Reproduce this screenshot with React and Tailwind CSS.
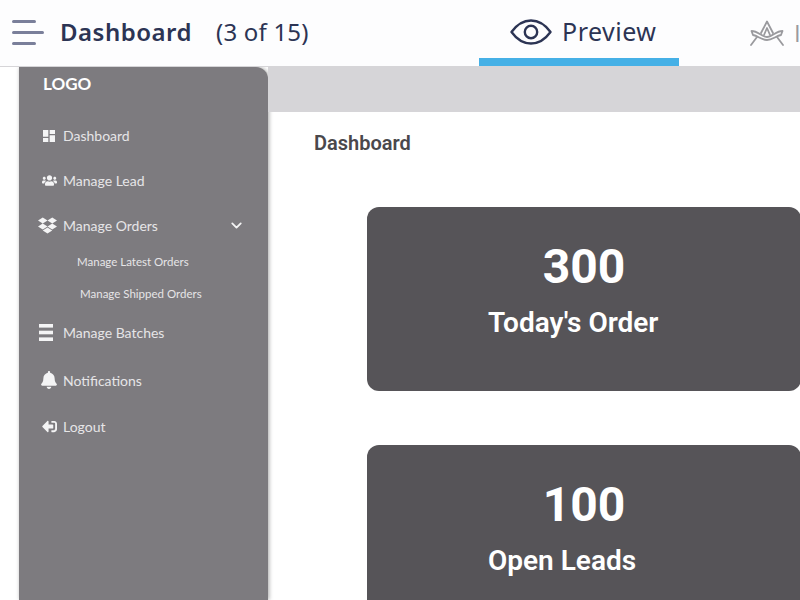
import React from 'react';
import { FaUsers, FaDropbox, FaBell, FaSignOutAlt } from 'react-icons/fa';
import { MdDashboard } from 'react-icons/md';
import { ChevronDown } from 'lucide-react';

const EyeIcon = () => (
    <svg width="42" height="26" viewBox="0 0 42 26" fill="none" stroke="#2c3454" strokeWidth="2.4">
        <path d="M1.5 13 C8 4 14 1.5 21 1.5 C28 1.5 34 4 40.5 13 C34 22 28 24.5 21 24.5 C14 24.5 8 22 1.5 13 Z" strokeLinejoin="round" />
        <circle cx="21" cy="13" r="6.2" />
    </svg>
);

const InstallIcon = () => (
    <svg width="34" height="26" viewBox="0 0 34 26" fill="none" stroke="#9a9a9e" strokeWidth="1.8" strokeLinejoin="round" strokeLinecap="round">
        <path d="M1.5 11 C8 11 12 17 17 17 C22 17 26 11 32.5 11 L31 15 C26 16 22 20 17 20 C12 20 8 16 3 15 Z" />
        <path d="M11 13 L17 1.5 L23 13" />
        <path d="M14 15 L17 8 L20 15" />
        <path d="M7 17 L1 25 M27 17 L33 25" />
    </svg>
);

const BarsIcon = ({ className }) => (
    <svg width="14" height="17" viewBox="0 0 14 17" fill="currentColor" className={className}>
        <rect x="0" y="0" width="14" height="3.6" />
        <rect x="0" y="6.7" width="14" height="3.6" />
        <rect x="0" y="13.4" width="14" height="3.6" />
    </svg>
);

const Hamburger = () => (
    <div className="-mt-[1px] flex w-[32px] flex-col items-start gap-[8px]">
        <span className="block h-[3px] w-[24px] rounded-full bg-[#7a7f9a]" />
        <span className="block h-[3px] w-[32px] rounded-full bg-[#7a7f9a]" />
        <span className="block h-[3px] w-[24px] rounded-full bg-[#7a7f9a]" />
    </div>
);

const Header = () => (
    <header className="relative z-10 flex h-[67px] shrink-0 items-center border-b border-[#d6d5d8] bg-[#fdfdfe] font-['Noto_Sans',sans-serif] text-[#2c3454]">
        <div className="mr-[16px] ml-[12px] shrink-0">
            <Hamburger />
        </div>
        <h1 className="w-[156px] shrink-0 pb-[2px] text-[24px] font-semibold tracking-[0.5px]">Dashboard</h1>
        <span className="w-[263px] shrink-0 pb-[2px] text-[24px] tracking-[0.2px]">(3 of 15)</span>
        <div className="flex h-full w-[200px] shrink-0 items-center gap-[10px] border-b-[8px] border-[#45b0e6] pt-[5px] pl-[31px]">
            <EyeIcon />
            <span className="text-[25px] tracking-[0.5px]">Preview</span>
        </div>
        <div className="ml-[71px] flex shrink-0 items-center gap-[10px] whitespace-nowrap font-['Open_Sans',sans-serif] text-[24px] text-[#9a9a9e]">
            <InstallIcon />
            <span>I</span>
        </div>
    </header>
);

const SidebarItem = ({ icon: Icon, label, size, height, iconPad = 'pr-[6px]' }) => (
    <div className={`flex items-center ${height}`}>
        <div className={`flex w-[44px] shrink-0 justify-end ${iconPad}`}>
            <Icon size={size} className="text-[#f4f4f5]" />
        </div>
        <span className="text-[14px] text-[#e6e5e7]">{label}</span>
    </div>
);

const LogoutIcon = (props) => <FaSignOutAlt {...props} className={`-scale-x-100 ${props.className}`} />;

const Sidebar = () => (
    <aside className="ml-[19px] w-[249px] shrink-0 rounded-tr-xl bg-[#7d7b7f] font-['Lato',sans-serif] shadow-[1px_0_4px_rgba(0,0,0,0.35)]">
        <div className="flex h-[34px] items-center pl-[24px] text-[17px] font-bold text-white">LOGO</div>
        <nav className="mt-[12px]">
            <SidebarItem icon={MdDashboard} label="Dashboard" size={16} height="h-[45px]" />
            <SidebarItem icon={FaUsers} label="Manage Lead" size={15} height="h-[45px]" />
            <div className="flex h-[45px] items-center pr-[23px]">
                <div className="flex w-[44px] shrink-0 justify-end pr-[6px]">
                    <FaDropbox size={19} className="text-[#f4f4f5]" />
                </div>
                <span className="flex-1 text-[14px] text-[#e6e5e7]">Manage Orders</span>
                <ChevronDown size={17} strokeWidth={2.5} className="text-[#f4f4f5]" />
            </div>
            <div className="-mt-[2px] flex h-[32px] items-center pl-[58px] text-[11.5px] text-[#e6e5e7]">Manage Latest Orders</div>
            <div className="flex h-[32px] items-center pl-[61px] text-[11.5px] text-[#e6e5e7]">Manage Shipped Orders</div>
            <SidebarItem icon={BarsIcon} label="Manage Batches" height="h-[44px]" iconPad="pr-[10px]" />
            <SidebarItem icon={FaBell} label="Notifications" size={18} height="h-[52px]" iconPad="pr-[5px]" />
            <SidebarItem icon={LogoutIcon} label="Logout" size={15} height="h-[40px]" />
        </nav>
    </aside>
);

const StatCard = ({ value, label }) => (
    <div className="flex h-[184px] w-[434px] shrink-0 flex-col rounded-xl bg-[#565458] font-['Roboto',sans-serif] text-white">
        <div className="mt-[28px] text-center text-[48px] leading-[64px] font-bold">{value}</div>
        <div className="mt-[4px] pl-[121px] text-[28px] leading-[40px] font-semibold">{label}</div>
    </div>
);

export default function App() {
    return (
        <div className="flex h-[600px] w-[800px] flex-col overflow-hidden bg-white">
            <Header />
            <div className="flex min-h-0 flex-1">
                <Sidebar />
                <main className="min-w-0 flex-1">
                    <div className="h-[45px] bg-[#d6d5d8]" />
                    <h2 className="mt-[18px] ml-[46px] font-['Roboto',sans-serif] text-[20px] leading-[26px] font-semibold text-[#4a484c]">Dashboard</h2>
                    <div className="mt-[51px] ml-[99px] flex flex-col gap-[54px]">
                        <StatCard value="300" label="Today's Order" />
                        <StatCard value="100" label="Open Leads" />
                    </div>
                </main>
            </div>
        </div>
    );
}
